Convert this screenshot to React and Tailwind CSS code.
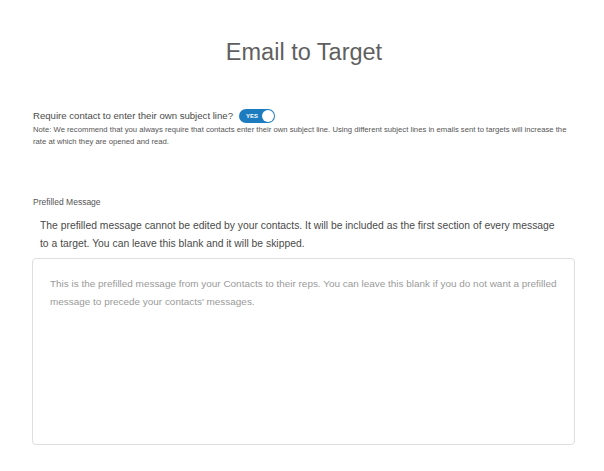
export default function App() {
  return (
    <div className="min-h-[471px] bg-white font-['Liberation_Sans',Arial,sans-serif] text-[#4a4a4a]">
      <h1 className="pl-[4px] pt-[38px] text-center text-[23.5px] leading-[28px] text-[#5f5f5f]">Email to Target</h1>

      <div className="mt-[43px] pl-[33px] pr-[30px]">
        <div className="flex items-center gap-[6px] text-[9.6px] leading-[14px]">
          <span>Require contact to enter their own subject line?</span>
          <button className="flex h-[14px] w-[36px] items-center justify-between rounded-full bg-[#1d7cbf] pl-[7px] pr-[1px]">
            <span className="text-[6px] font-bold leading-none text-white">YES</span>
            <span className="h-[12px] w-[12px] rounded-full bg-white" />
          </button>
        </div>
        <p className="mt-[1px] text-[7.7px] leading-[12px] text-[#555]">
          Note: We recommend that you always require that contacts enter their own subject line. Using different subject lines in emails sent to targets will increase the rate at which they are opened and read.
        </p>
      </div>

      <div className="mt-[48px] pl-[32px] pr-[29px]">
        <p className="pl-[1px] text-[8.5px] leading-[12px] text-[#555]">Prefilled Message</p>
        <p className="mt-[9px] pl-[8px] pr-[14px] text-[10.35px] leading-[18px] text-[#4a4a4a]">
          The prefilled message cannot be edited by your contacts. It will be included as the first section of every message to a target. You can leave this blank and it will be skipped.
        </p>
        <div className="mt-[5px] h-[187px] rounded-[4px] border border-[#dedede] px-[17px] pt-[16px]">
          <p className="text-[9.95px] leading-[18px] text-[#9a9a9a]">
            This is the prefilled message from your Contacts to their reps. You can leave this blank if you do not want a prefilled message to precede your contacts' messages.
          </p>
        </div>
      </div>
    </div>
  )
}
